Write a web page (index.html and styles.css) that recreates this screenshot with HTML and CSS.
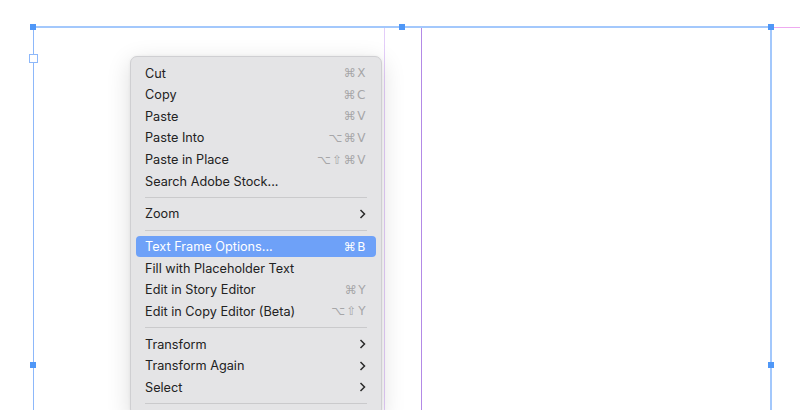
FILE: index.html
```html
<!DOCTYPE html>
<html lang="en">
<head>
    <meta charset="UTF-8">
    <title>Context Menu</title>
    <link rel="stylesheet" href="styles.css">
</head>
<body>
    <div class="canvas">
        <!-- text frame and guides -->
        <div class="frame-top"></div>
        <div class="frame-left"></div>
        <div class="frame-right"></div>
        <div class="bleed"></div>
        <div class="guide-light"></div>
        <div class="guide-dark"></div>
        <div class="handle" style="left:30px; top:24px;"></div>
        <div class="handle" style="left:399px; top:24px;"></div>
        <div class="handle" style="left:768px; top:24px;"></div>
        <div class="handle" style="left:30px; top:362px;"></div>
        <div class="handle" style="left:768px; top:362px;"></div>
        <div class="port"></div>

        <div class="menu">
            <div class="item"><span>Cut</span><span class="key">⌘X</span></div>
            <div class="item"><span>Copy</span><span class="key">⌘C</span></div>
            <div class="item"><span>Paste</span><span class="key">⌘V</span></div>
            <div class="item"><span>Paste Into</span><span class="key">⌥⌘V</span></div>
            <div class="item"><span>Paste in Place</span><span class="key">⌥⇧⌘V</span></div>
            <div class="item"><span>Search Adobe Stock...</span></div>
            <div class="sep"></div>
            <div class="item"><span>Zoom</span><svg class="chev" width="7" height="10" viewBox="0 0 7 10"><path d="M1.5 1l4 4-4 4" fill="none" stroke="#2a2a2a" stroke-width="1.5"/></svg></div>
            <div class="sep"></div>
            <div class="item active"><span>Text Frame Options...</span><span class="key">⌘B</span></div>
            <div class="item"><span>Fill with Placeholder Text</span></div>
            <div class="item"><span>Edit in Story Editor</span><span class="key">⌘Y</span></div>
            <div class="item"><span>Edit in Copy Editor (Beta)</span><span class="key">⌥⇧Y</span></div>
            <div class="sep"></div>
            <div class="item"><span>Transform</span><svg class="chev" width="7" height="10" viewBox="0 0 7 10"><path d="M1.5 1l4 4-4 4" fill="none" stroke="#2a2a2a" stroke-width="1.5"/></svg></div>
            <div class="item"><span>Transform Again</span><svg class="chev" width="7" height="10" viewBox="0 0 7 10"><path d="M1.5 1l4 4-4 4" fill="none" stroke="#2a2a2a" stroke-width="1.5"/></svg></div>
            <div class="item"><span>Select</span><svg class="chev" width="7" height="10" viewBox="0 0 7 10"><path d="M1.5 1l4 4-4 4" fill="none" stroke="#2a2a2a" stroke-width="1.5"/></svg></div>
            <div class="sep"></div>
        </div>
    </div>
</body>
</html>
```
FILE: styles.css
```css
body {
    margin: 0;
    padding: 0;
    background: #fff;
    font-family: Inter, "Liberation Sans", sans-serif;
    overflow: hidden;
}
.canvas {
    position: relative;
    width: 800px;
    height: 410px;
    background: #fff;
}
.frame-top {
    position: absolute;
    left: 33px;
    top: 26px;
    width: 739px;
    height: 2px;
    background: #a3c8fc;
}
.frame-left {
    position: absolute;
    left: 33px;
    top: 27px;
    width: 1px;
    height: 383px;
    background: #8db8fa;
}
.frame-right {
    position: absolute;
    left: 770px;
    top: 27px;
    width: 2px;
    height: 383px;
    background: #a3c8fc;
}
.bleed {
    position: absolute;
    left: 772px;
    top: 27px;
    width: 28px;
    height: 1px;
    background: #eeaaf0;
}
.guide-light {
    position: absolute;
    left: 384px;
    top: 28px;
    width: 1px;
    height: 382px;
    background: #e3cdf9;
}
.guide-dark {
    position: absolute;
    left: 421px;
    top: 28px;
    width: 1px;
    height: 382px;
    background: #b38ae6;
}
.handle {
    position: absolute;
    width: 6px;
    height: 6px;
    background: #4f97f7;
}
.port {
    position: absolute;
    left: 29px;
    top: 54px;
    width: 7px;
    height: 7px;
    border: 1px solid #8db8fa;
    background: #fff;
}
.menu {
    position: absolute;
    left: 130px;
    top: 56px;
    width: 250px;
    padding: 5.4px 0 6px;
    background: #e4e4e6;
    border: 1px solid #cfcfd2;
    border-radius: 7px;
    box-shadow: 0 6px 24px rgba(0, 0, 0, 0.14), 0 0 3px rgba(0, 0, 0, 0.06);
}
.item {
    display: flex;
    align-items: center;
    justify-content: space-between;
    height: 21.6px;
    margin: 0 5px;
    padding: 0 9px;
    border-radius: 4px;
    font-size: 12.7px;
    color: #222;
}
.item.active {
    background: #6ea1f8;
    color: #fff;
}
.key {
    font-family: "DejaVu Sans", sans-serif;
    font-size: 12px;
    letter-spacing: 1.5px;
    color: #a6a6a8;
}
.item.active .key {
    color: #fff;
}
.chev {
    margin-right: 1px;
}
.sep {
    height: 1px;
    margin: 5.05px 14px;
    background: #cacacc;
}
```
